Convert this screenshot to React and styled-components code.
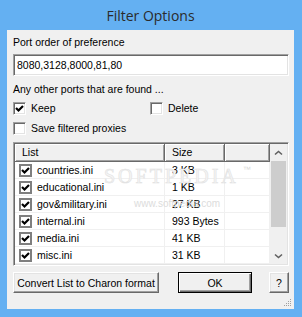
import styled, { createGlobalStyle } from "styled-components";

const GlobalStyle = createGlobalStyle`
  body {
    margin: 0;
    background: #ffffff;
  }
`;

const StyledWindow = styled.div`
  width: 302px;
  height: 317px;
  box-sizing: border-box;
  background: #64b0f2;
  padding: 0 8px 8px 7px;
  display: flex;
  flex-direction: column;
  font-family: "Liberation Sans", Arial, sans-serif;
  font-size: 10.5px;
  color: #000;
`;

const StyledTitle = styled.div`
  height: 30px;
  display: flex;
  align-items: center;
  justify-content: center;
  font-family: "Open Sans", "Noto Sans", sans-serif;
  font-size: 14px;
  color: #2b2b2b;
  padding-top: 1px;
  box-sizing: border-box;
`;

const StyledClient = styled.div`
  position: relative;
  flex: 1;
  background: #f0f0f0;
  padding: 6px 5px 0 6px;
  display: flex;
  flex-direction: column;
`;

const StyledLabel = styled.div`
  line-height: 13px;
  height: 13px;
  margin-top: ${(p) => p.$mt || 0}px;
  white-space: nowrap;
`;

const StyledInput = styled.div`
  margin-top: 5px;
  height: 22px;
  box-sizing: border-box;
  background: #fff;
  border-top: 1px solid #a0a0a0;
  border-left: 1px solid #a0a0a0;
  border-right: 1px solid #fff;
  border-bottom: 1px solid #fff;
  box-shadow: inset 1px 1px 0 #696969, inset -1px -1px 0 #e3e3e3;
  padding: 0 3px;
  display: flex;
  align-items: center;
`;

const StyledCheckRow = styled.div`
  margin-top: ${(p) => p.$mt}px;
  height: 13px;
  display: grid;
  grid-template-columns: 137px 1fr;
  align-items: center;
`;

const StyledCheckItem = styled.div`
  display: flex;
  align-items: center;
  gap: 5px;
  line-height: 13px;
`;

const StyledBox = styled.div`
  width: 13px;
  height: 13px;
  box-sizing: border-box;
  background: #fff;
  border-top: 1px solid #a0a0a0;
  border-left: 1px solid #a0a0a0;
  border-right: 1px solid #fff;
  border-bottom: 1px solid #fff;
  box-shadow: inset 1px 1px 0 #696969, inset -1px -1px 0 #e3e3e3;
  display: flex;
  align-items: center;
  justify-content: center;
`;

const StyledFlatBox = styled.div`
  width: 13px;
  height: 13px;
  box-sizing: border-box;
  background: #fff;
  border: 2px solid #7f7f7f;
  display: flex;
  align-items: center;
  justify-content: center;
`;

const StyledList = styled.div`
  position: relative;
  margin-top: 7px;
  height: 124px;
  box-sizing: border-box;
  border-top: 1px solid #a0a0a0;
  border-left: 1px solid #a0a0a0;
  border-right: 1px solid #fff;
  border-bottom: 1px solid #fff;
  box-shadow: inset 1px 1px 0 #696969, inset -1px -1px 0 #e3e3e3;
  padding: 1px;
  display: flex;
  overflow: hidden;
`;

const StyledListBody = styled.div`
  flex: 1;
  background: #fff;
  display: flex;
  flex-direction: column;
`;

const StyledGridRow = styled.div`
  display: grid;
  grid-template-columns: 150px 60px 1fr;
  height: ${(p) => (p.$header ? 18 : 17)}px;
`;

const StyledHeadCell = styled.div`
  background: #f0f0f0;
  border-right: 1px solid #696969;
  border-bottom: 1px solid #696969;
  box-shadow: inset 1px 1px 0 #fff, inset -1px -1px 0 #a0a0a0;
  padding-left: 7px;
  display: flex;
  align-items: center;
  line-height: 13px;
`;

const StyledCell = styled.div`
  border-right: 1px solid #f0f0f0;
  border-bottom: 1px solid #f0f0f0;
  display: flex;
  align-items: center;
  gap: 5px;
  padding-left: ${(p) => p.$pl}px;
  line-height: 13px;
  white-space: nowrap;
`;

const StyledScrollbar = styled.div`
  width: 17px;
  background: #f0f0f0;
  display: flex;
  flex-direction: column;
`;

const StyledArrow = styled.div`
  height: 17px;
  display: flex;
  align-items: center;
  justify-content: center;
`;

const StyledThumb = styled.div`
  margin: 0 1px;
  height: 66px;
  background: #cdcdcd;
`;

const StyledTrack = styled.div`
  flex: 1;
`;

const StyledWatermark = styled.div`
  position: absolute;
  left: 90px;
  top: 22px;
  font-family: "Liberation Serif", serif;
  font-size: 20px;
  letter-spacing: 3px;
  color: #f6f6f6;
  -webkit-text-stroke: 0.6px #e2e2e2;
  pointer-events: none;
`;

const StyledWatermarkTm = styled.span`
  font-family: "Liberation Sans", sans-serif;
  font-size: 8px;
  letter-spacing: 0;
  vertical-align: top;
  margin-left: 4px;
  -webkit-text-stroke: 0;
  color: #d8d8d8;
`;

const StyledWatermarkUrl = styled.div`
  position: absolute;
  left: 120px;
  top: 55px;
  font-size: 10px;
  color: #dcdcdc;
  pointer-events: none;
`;

const StyledButtons = styled.div`
  margin-top: 6px;
  display: flex;
  align-items: center;
`;

const StyledButton = styled.div`
  width: ${(p) => p.$w}px;
  margin-left: ${(p) => p.$ml || 0}px;
  height: 21px;
  box-sizing: border-box;
  background: #f0f0f0;
  border-top: 1px solid ${(p) => (p.$default ? "#000" : "#fff")};
  border-left: 1px solid ${(p) => (p.$default ? "#000" : "#fff")};
  border-right: 1px solid ${(p) => (p.$default ? "#000" : "#696969")};
  border-bottom: 1px solid ${(p) => (p.$default ? "#000" : "#696969")};
  box-shadow: ${(p) =>
    p.$default
      ? "inset 1px 1px 0 #fff, inset -1px -1px 0 #696969, inset -2px -2px 0 #a0a0a0"
      : "inset -1px -1px 0 #a0a0a0, inset 1px 1px 0 #e3e3e3"};
  display: flex;
  align-items: center;
  justify-content: center;
  white-space: nowrap;
`;

const StyledGrip = styled.svg`
  position: absolute;
  right: 2px;
  bottom: 2px;
`;

function Check() {
  return (
    <svg width="9" height="9" viewBox="0 0 9 9">
      <path d="M1 4 L3.5 6.5 L8 2" fill="none" stroke="#000" strokeWidth="2.2" />
    </svg>
  );
}

function Chevron({ down }) {
  return (
    <svg width="9" height="6" viewBox="0 0 9 6">
      <path
        d={down ? "M1 1.5 L4.5 4.5 L8 1.5" : "M1 4.5 L4.5 1.5 L8 4.5"}
        fill="none"
        stroke="#606060"
        strokeWidth="1.6"
      />
    </svg>
  );
}

const files = [
  ["countries.ini", "3 KB"],
  ["educational.ini", "1 KB"],
  ["gov&military.ini", "27 KB"],
  ["internal.ini", "993 Bytes"],
  ["media.ini", "41 KB"],
  ["misc.ini", "31 KB"],
];

function App() {
  return (
    <>
      <GlobalStyle />
      <StyledWindow>
        <StyledTitle>Filter Options</StyledTitle>
        <StyledClient>
          <StyledLabel>Port order of preference</StyledLabel>
          <StyledInput>8080,3128,8000,81,80</StyledInput>
          <StyledLabel $mt={7}>Any other ports that are found ...</StyledLabel>
          <StyledCheckRow $mt={6}>
            <StyledCheckItem>
              <StyledBox>
                <Check />
              </StyledBox>
              Keep
            </StyledCheckItem>
            <StyledCheckItem>
              <StyledBox />
              Delete
            </StyledCheckItem>
          </StyledCheckRow>
          <StyledCheckRow $mt={7}>
            <StyledCheckItem>
              <StyledBox />
              Save filtered proxies
            </StyledCheckItem>
          </StyledCheckRow>
          <StyledList>
            <StyledListBody>
              <StyledGridRow $header>
                <StyledHeadCell>List</StyledHeadCell>
                <StyledHeadCell>Size</StyledHeadCell>
                <StyledHeadCell />
              </StyledGridRow>
              {files.map(([name, size]) => (
                <StyledGridRow key={name}>
                  <StyledCell $pl={4}>
                    <StyledFlatBox>
                      <Check />
                    </StyledFlatBox>
                    {name}
                  </StyledCell>
                  <StyledCell $pl={7}>{size}</StyledCell>
                  <StyledCell />
                </StyledGridRow>
              ))}
            </StyledListBody>
            <StyledScrollbar>
              <StyledArrow>
                <Chevron />
              </StyledArrow>
              <StyledThumb />
              <StyledTrack />
              <StyledArrow>
                <Chevron down />
              </StyledArrow>
            </StyledScrollbar>
            <StyledWatermark>
              SOFTPEDIA<StyledWatermarkTm>™</StyledWatermarkTm>
            </StyledWatermark>
            <StyledWatermarkUrl>www.softpedia.com</StyledWatermarkUrl>
          </StyledList>
          <StyledButtons>
            <StyledButton $w={146}>Convert List to Charon format</StyledButton>
            <StyledButton $w={74} $ml={19} $default>
              OK
            </StyledButton>
            <StyledButton $w={20} $ml={17}>
              ?
            </StyledButton>
          </StyledButtons>
          <StyledGrip width="10" height="10" viewBox="0 0 10 10">
            <g fill="#a0a0a0">
              <rect x="8" y="2" width="1" height="1" />
              <rect x="6" y="4" width="1" height="1" />
              <rect x="8" y="4" width="1" height="1" />
              <rect x="4" y="6" width="1" height="1" />
              <rect x="6" y="6" width="1" height="1" />
              <rect x="8" y="6" width="1" height="1" />
              <rect x="2" y="8" width="1" height="1" />
              <rect x="4" y="8" width="1" height="1" />
              <rect x="6" y="8" width="1" height="1" />
              <rect x="8" y="8" width="1" height="1" />
            </g>
          </StyledGrip>
        </StyledClient>
      </StyledWindow>
    </>
  );
}

export default App;
